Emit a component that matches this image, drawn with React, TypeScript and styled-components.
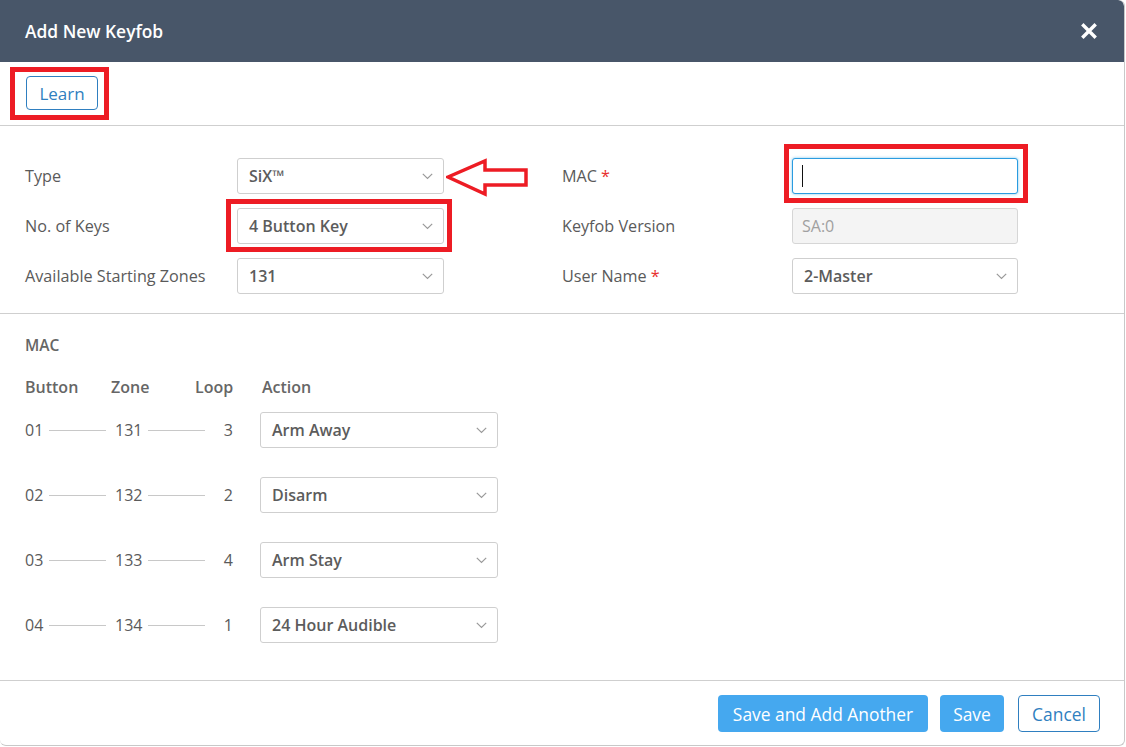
import React from "react";
import styled, { createGlobalStyle } from "styled-components";

const Global = createGlobalStyle`
  html, body { margin: 0; padding: 0; background: #ffffff; }
  body { font-family: "Open Sans", "Noto Sans", sans-serif; color: #555; }
  * { box-sizing: border-box; }
`;

const Modal = styled.div`
  width: 1125px;
  height: 746px;
  background: #fff;
  border: 1px solid #c8c8c8;
  border-top: none;
  border-left: none;
  border-radius: 0 6px 6px 6px;
  display: flex;
  flex-direction: column;
  overflow: hidden;
`;

const Header = styled.div`
  height: 62px;
  flex: 0 0 62px;
  background: #485669;
  display: flex;
  align-items: center;
  justify-content: space-between;
  padding: 0 26px 0 25px;
  border-radius: 0 6px 0 0;
`;

const Title = styled.h1`
  margin: 0;
  font-size: 17.4px;
  font-weight: 600;
  color: #fff;
`;

const Close = styled.button`
  border: none;
  background: none;
  padding: 0;
  width: 18px;
  height: 18px;
  display: flex;
  align-items: center;
  justify-content: center;
  cursor: pointer;
`;

const Toolbar = styled.div`
  flex: 0 0 64px;
  height: 64px;
  display: flex;
  align-items: flex-start;
  padding: 14px 26px 0;
  border-bottom: 1px solid #cfcfcf;
`;

const Annotated = styled.div`
  position: relative;
  display: inline-flex;
`;

const RedBox = styled.div<{ $t: number; $l: number; $r: number; $b: number }>`
  position: absolute;
  top: ${(p) => p.$t}px;
  left: ${(p) => p.$l}px;
  right: ${(p) => p.$r}px;
  bottom: ${(p) => p.$b}px;
  border: 5px solid #ed1c24;
  pointer-events: none;
`;

const OutlineButton = styled.button<{ $w: number; $h: number }>`
  width: ${(p) => p.$w}px;
  height: ${(p) => p.$h}px;
  border: 1px solid #2f7fc0;
  border-radius: 4px;
  background: #fff;
  color: #2f7fc0;
  font-family: "Open Sans", sans-serif;
  font-size: 17px;
  padding: 0;
  cursor: pointer;
`;

const FormSection = styled.div`
  padding: 32px 25px 19px;
  border-bottom: 1px solid #cfcfcf;
`;

const FormGrid = styled.div`
  display: grid;
  grid-template-columns: 212px 207px 118px 230px 226px;
  grid-auto-rows: 36px;
  row-gap: 14px;
  align-items: center;
`;

const Label = styled.label`
  font-size: 16.2px;
  color: #5a5a5a;
  white-space: nowrap;
`;

const Req = styled.span`
  color: #e8312f;
  margin-left: 4px;
`;

const SelectBox = styled.div<{ $w: number }>`
  width: ${(p) => p.$w}px;
  height: 36px;
  border: 1px solid #cfcfcf;
  border-radius: 3px;
  background: #fff;
  display: flex;
  align-items: center;
  justify-content: space-between;
  padding: 0 10px 0 11px;
  font-size: 16px;
  font-weight: 600;
  color: #5c5c5c;
`;

const TextInput = styled.div<{ $focus?: boolean; $disabled?: boolean }>`
  width: 226px;
  height: 36px;
  border: 1px solid ${(p) => (p.$focus ? "#2a9ce0" : "#d6d6d6")};
  box-shadow: ${(p) => (p.$focus ? "0 0 3px rgba(42,156,224,0.6)" : "none")};
  background: ${(p) => (p.$disabled ? "#f4f4f4" : "#fff")};
  border-radius: 3px;
  display: flex;
  align-items: center;
  padding: 0 9px;
  font-size: 16px;
  color: #a0a0a0;
`;

const Caret = styled.span`
  width: 1px;
  height: 22px;
  background: #111;
`;

const Spacer = styled.div``;

const ArrowWrap = styled.div`
  position: relative;
  width: 207px;
  height: 36px;
`;

const ArrowSvg = styled.svg`
  position: absolute;
  left: 209px;
  top: -1px;
`;

const ButtonsSection = styled.div`
  flex: 1;
  padding: 20px 25px 0;
  border-bottom: 1px solid #cfcfcf;
`;

const SectionTitle = styled.div`
  font-size: 15.5px;
  font-weight: 600;
  color: #666;
  line-height: 22px;
  margin-bottom: 20px;
`;

const Table = styled.div`
  display: grid;
  grid-template-columns: 86px 84px 38px 238px;
  grid-auto-rows: 36px;
  row-gap: 29px;
  align-items: center;
`;

const HeadRow = styled.div`
  display: grid;
  grid-template-columns: 86px 84px 38px 237px;
  height: 22px;
  align-items: center;
  margin-bottom: 14px;
`;

const HeadCell = styled.div<{ $right?: boolean; $pad?: number }>`
  font-size: 16px;
  font-weight: 600;
  color: #666;
  text-align: ${(p) => (p.$right ? "right" : "left")};
  padding-left: ${(p) => p.$pad ?? 0}px;
`;

const Cell = styled.div<{ $right?: boolean; $pad?: number }>`
  display: flex;
  align-items: center;
  justify-content: ${(p) => (p.$right ? "flex-end" : "flex-start")};
  padding-left: ${(p) => p.$pad ?? 0}px;
  font-size: 16px;
  color: #5a5a5a;
  white-space: nowrap;
  overflow: visible;
`;

const Line = styled.span<{ $gap: number }>`
  display: inline-block;
  width: 57px;
  height: 1px;
  background: #c8c8c8;
  margin-left: ${(p) => p.$gap}px;
  flex: 0 0 57px;
`;

const ActionCell = styled.div`
  margin-left: 27px;
`;

const Footer = styled.div`
  flex: 0 0 64px;
  display: flex;
  justify-content: flex-end;
  align-items: flex-start;
  padding: 14px 24px 0;
  gap: 12px;
`;

const PrimaryButton = styled.button<{ $w: number }>`
  width: ${(p) => p.$w}px;
  height: 37px;
  border: none;
  border-radius: 4px;
  background: #45a8ef;
  color: #fff;
  font-family: "Open Sans", sans-serif;
  font-size: 17.4px;
  padding: 0;
  cursor: pointer;
`;

const CancelButton = styled(OutlineButton)`
  margin-left: 2px;
  font-size: 17.4px;
`;

const Chevron = () => (
  <svg width="11" height="7" viewBox="0 0 11 7">
    <polyline points="0.8,0.8 5.5,5.5 10.2,0.8" fill="none" stroke="#9a9a9a" strokeWidth="1.2" />
  </svg>
);

const Select = ({ value, w }: { value: string; w: number }) => (
  <SelectBox $w={w}>
    <span>{value}</span>
    <Chevron />
  </SelectBox>
);

const rows = [
  { b: "01", z: "131", l: "3", a: "Arm Away" },
  { b: "02", z: "132", l: "2", a: "Disarm" },
  { b: "03", z: "133", l: "4", a: "Arm Stay" },
  { b: "04", z: "134", l: "1", a: "24 Hour Audible" },
];

export default function App() {
  return (
    <>
      <Global />
      <Modal>
        <Header>
          <Title>Add New Keyfob</Title>
          <Close aria-label="Close">
            <svg width="16" height="16" viewBox="0 0 16 16">
              <path d="M2.5 2.5 L13.5 13.5 M13.5 2.5 L2.5 13.5" stroke="#fff" strokeWidth="3.4" strokeLinecap="square" />
            </svg>
          </Close>
        </Header>
        <Toolbar>
          <Annotated>
            <OutlineButton $w={72} $h={34}>Learn</OutlineButton>
            <RedBox $t={-9} $l={-16} $r={-11} $b={-10} />
          </Annotated>
        </Toolbar>
        <FormSection>
          <FormGrid>
            <Label>Type</Label>
            <ArrowWrap>
              <Select value="SiX™" w={207} />
              <ArrowSvg width="84" height="40" viewBox="0 0 84 40">
                <path
                  d="M2 20 L39 4 L39 13 L80 13 L80 28 L39 28 L39 37 Z"
                  fill="none"
                  stroke="#ed1c24"
                  strokeWidth="3.5"
                  strokeLinejoin="miter"
                />
              </ArrowSvg>
            </ArrowWrap>
            <Spacer />
            <Label>
              MAC<Req>*</Req>
            </Label>
            <Annotated>
              <TextInput $focus>
                <Caret />
              </TextInput>
              <RedBox $t={-14} $l={-8} $r={-10} $b={-9} />
            </Annotated>

            <Label>No. of Keys</Label>
            <Annotated>
              <Select value="4 Button Key" w={207} />
              <RedBox $t={-9} $l={-11} $r={-8} $b={-8} />
            </Annotated>
            <Spacer />
            <Label>Keyfob Version</Label>
            <TextInput $disabled>SA:0</TextInput>

            <Label>Available Starting Zones</Label>
            <Select value="131" w={207} />
            <Spacer />
            <Label>
              User Name<Req>*</Req>
            </Label>
            <Select value="2-Master" w={226} />
          </FormGrid>
        </FormSection>
        <ButtonsSection>
          <SectionTitle>MAC</SectionTitle>
          <HeadRow>
            <HeadCell>Button</HeadCell>
            <HeadCell>Zone</HeadCell>
            <HeadCell $right>Loop</HeadCell>
            <HeadCell $pad={29}>Action</HeadCell>
          </HeadRow>
          <Table>
            {rows.map((r) => (
              <React.Fragment key={r.b}>
                <Cell>
                  {r.b}
                  <Line $gap={6} />
                </Cell>
                <Cell $pad={4}>
                  {r.z}
                  <Line $gap={6} />
                </Cell>
                <Cell $right>{r.l}</Cell>
                <ActionCell>
                  <Select value={r.a} w={238} />
                </ActionCell>
              </React.Fragment>
            ))}
          </Table>
        </ButtonsSection>
        <Footer>
          <PrimaryButton $w={210}>Save and Add Another</PrimaryButton>
          <PrimaryButton $w={64}>Save</PrimaryButton>
          <CancelButton $w={82} $h={37}>Cancel</CancelButton>
        </Footer>
      </Modal>
    </>
  );
}
